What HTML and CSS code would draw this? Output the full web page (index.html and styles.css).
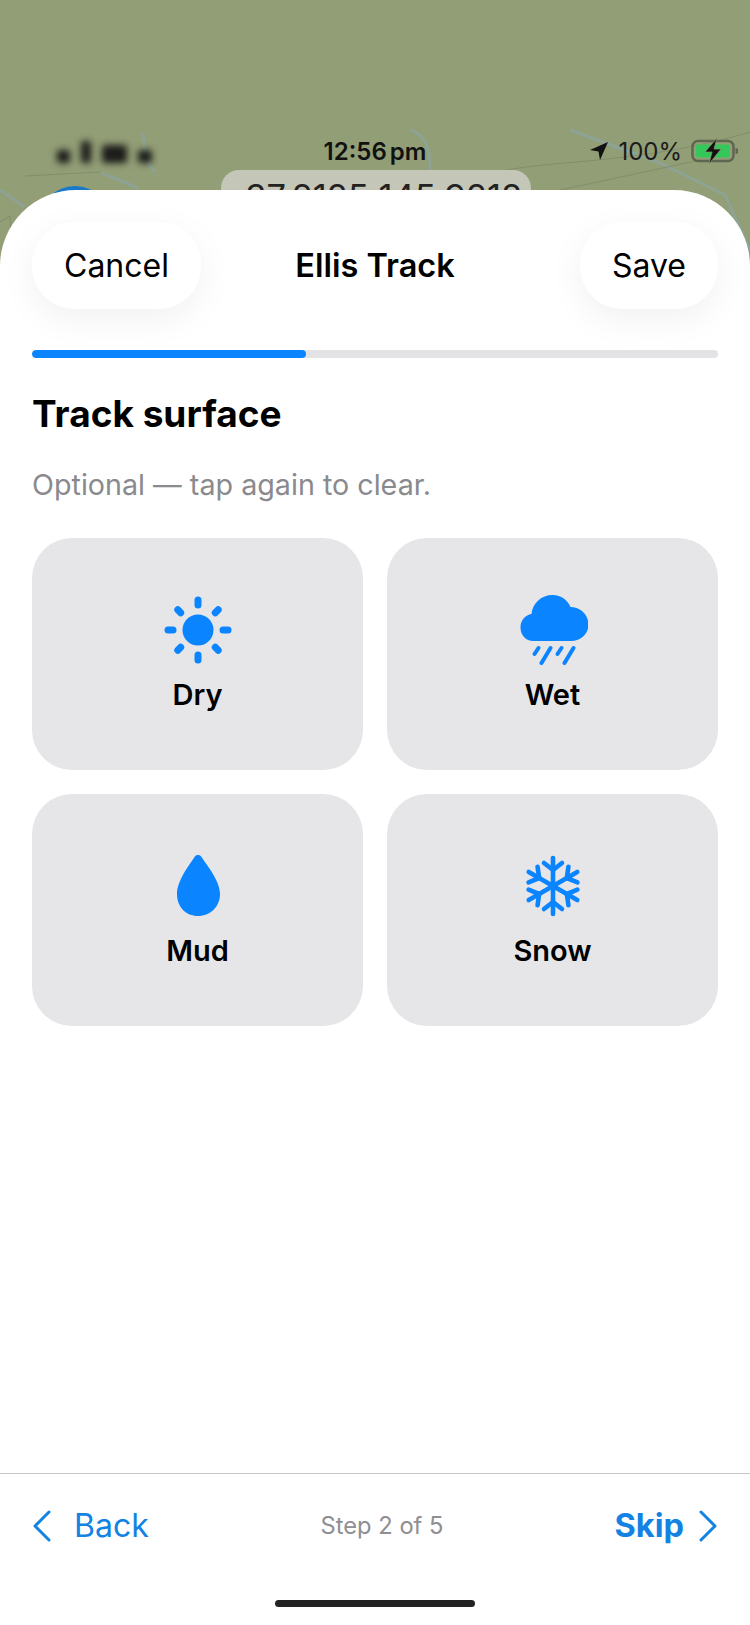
FILE: index.html
```html
<!DOCTYPE html>
<html>
<head>
    <meta charset="utf-8">
    <title>Ellis Track - Track surface</title>
    <link rel="stylesheet" href="styles.css">
</head>
<body>
    <div class="page">
        <!-- map showing behind the sheet -->
        <div class="map">
            <svg class="map_lines" width="750" height="280" viewBox="0 0 750 280">
                <g fill="none" stroke="#8aa6a8" stroke-width="3" opacity="0.6">
                    <path d="M143 133 L146 160 L155 172"/>
                    <path d="M102 173 L138 188"/>
                    <path d="M0 190 L25 207"/>
                    <path d="M411 130 C425 136 430 145 430 170"/>
                    <path d="M570 130 L660 163 L725 195 L750 250"/>
                </g>
                <g fill="none" stroke="#6f7a5c" stroke-width="1" opacity="0.45">
                    <path d="M25 176 L100 172"/>
                    <path d="M500 172 C540 160 640 165 750 132"/>
                    <path d="M560 190 L700 160"/>
                    <path d="M0 222 L10 216 L12 260"/>
                </g>
                <circle cx="75" cy="222" r="36" fill="#1a78c8"/>
            </svg>
            <div class="coord_chip">-37.2125 145.9218</div>
            <div class="status_bar">
                <div class="signal_blur">
                    <span class="blob b1"></span>
                    <span class="blob b2"></span>
                    <span class="blob b3"></span>
                    <span class="blob b4"></span>
                </div>
                <div class="status_time">12:56 pm</div>
                <div class="status_right">
                    <svg width="20" height="20" viewBox="0 0 20 20"><path d="M19 1 L1 9 L9.5 10.5 L11 19 Z" fill="#111"/></svg>
                    <span class="status_pct">100%</span>
                    <svg width="47" height="26" viewBox="0 0 47 26">
                        <rect x="1.500" y="3" width="41" height="20" rx="5.500" fill="none" stroke="#5f6650" stroke-width="2.500"/>
                        <rect x="5" y="6.500" width="34" height="13" rx="2.500" fill="#34c759"/>
                        <path d="M44.500 10 a3 3 0 0 1 0 6 Z" fill="#5f6650"/>
                        <path d="M26 0 L14 14 L21 14 L18 26 L30 11 L23 11 Z" fill="#111" stroke="#8d9873" stroke-width="0.7"/>
                    </svg>
                </div>
            </div>
        </div>

        <div class="sheet">
            <div class="sheet_header">
                <button class="pill_btn cancel_btn">Cancel</button>
                <h1 class="sheet_title">Ellis Track</h1>
                <button class="pill_btn save_btn">Save</button>
            </div>

            <div class="progress"><div class="progress_fill" style="width: 40%"></div></div>

            <div class="content">
                <h2 class="step_title">Track surface</h2>
                <p class="step_hint">Optional — tap again to clear.</p>

                <div class="option_grid">
                    <div class="option_card">
                        <svg class="option_icon" viewBox="0 0 70 70">
                            <circle cx="35" cy="35" r="15.500" fill="#0a84ff"/>
                            <g stroke="#0a84ff" stroke-width="7" stroke-linecap="round">
                                <path d="M35 5 V10"/>
                                <path d="M35 60 V65"/>
                                <path d="M5 35 H10"/>
                                <path d="M60 35 H65"/>
                                <path d="M14.800 14.800 L17.700 17.700"/>
                                <path d="M52.300 52.300 L55.200 55.200"/>
                                <path d="M52.300 17.700 L55.200 14.800"/>
                                <path d="M14.800 55.200 L17.700 52.300"/>
                            </g>
                        </svg>
                        <span class="option_label">Dry</span>
                    </div>
                    <div class="option_card">
                        <svg class="option_icon" viewBox="27.500 0 70 70">
                            <path d="M43 46 C35 46 30 40 30 32.500 C30 25 35 20 41 19 C42 8 51 0 62 0 C71 0 77 5 80 12 C90 12 98 20 98 29.500 C98 39 90 46 81 46 Z" fill="#0a84ff"/>
                            <g stroke="#0a84ff" stroke-width="4" stroke-linecap="round">
                                <path d="M48 53 L44 59"/>
                                <path d="M60 53 L51 68"/>
                                <path d="M71 53 L67 59"/>
                                <path d="M83 53 L74 68"/>
                            </g>
                        </svg>
                        <span class="option_label">Wet</span>
                    </div>
                    <div class="option_card">
                        <svg class="option_icon" viewBox="0 0 70 70">
                            <path d="M35 4 C36.500 4 37.500 4.500 38.500 6 C44.500 15 57 30 57 43 C57 56 47 65 35 65 C23 65 14 56 14 43 C14 30 25.500 15 31.500 6 C32.500 4.500 33.500 4 35 4 Z" fill="#0a84ff"/>
                        </svg>
                        <span class="option_label">Mud</span>
                    </div>
                    <div class="option_card">
                        <svg class="option_icon" viewBox="0 0 70 70">
                            <defs>
                                <g id="snow_arm">
                                    <path d="M35 35 V7"/>
                                    <path d="M26 12 L35 19 L44 12"/>
                                </g>
                            </defs>
                            <g fill="none" stroke="#0a84ff" stroke-width="4.600" stroke-linecap="round" stroke-linejoin="round">
                                <use href="#snow_arm"/>
                                <use href="#snow_arm" transform="rotate(60 35 35)"/>
                                <use href="#snow_arm" transform="rotate(120 35 35)"/>
                                <use href="#snow_arm" transform="rotate(180 35 35)"/>
                                <use href="#snow_arm" transform="rotate(240 35 35)"/>
                                <use href="#snow_arm" transform="rotate(300 35 35)"/>
                            </g>
                        </svg>
                        <span class="option_label">Snow</span>
                    </div>
                </div>
            </div>

            <div class="footer">
                <div class="footer_link">
                    <svg class="chevron" width="20" height="32" viewBox="0 0 20 32"><path d="M17 2 L3 16 L17 30" fill="none" stroke="#1283e2" stroke-width="3" stroke-linecap="round" stroke-linejoin="round"/></svg>
                    <span class="back_text">Back</span>
                </div>
                <div class="step_count">Step 2 of 5</div>
                <div class="footer_link">
                    <span class="skip_text">Skip</span>
                    <svg class="chevron" width="20" height="32" viewBox="0 0 20 32"><path d="M3 2 L17 16 L3 30" fill="none" stroke="#1283e2" stroke-width="3" stroke-linecap="round" stroke-linejoin="round"/></svg>
                </div>
            </div>
            <div class="home_area"><div class="home_bar"></div></div>
        </div>
    </div>
</body>
</html>
```

FILE: styles.css
```css
body{
    margin: 0;
    background-color: #fff;
    font-family: Inter, "Liberation Sans", sans-serif;
}
.page{
    width: 750px;
    height: 1625px;
    display: flex;
    flex-direction: column;
    overflow: hidden;
    background-color: #929e76;
}

/* map behind the sheet */
.map{
    position: relative;
    height: 190px;
    box-sizing: border-box;
    padding-top: 136px;
}
.map_lines{
    position: absolute;
    left: 0;
    top: 0;
}
.coord_chip{
    position: absolute;
    left: 221px;
    top: 170px;
    width: 310px;
    height: 54px;
    background-color: #c4c6b8;
    border-radius: 18px;
    text-align: center;
    font-size: 34.500px;
    line-height: 54px;
    color: #222;
}
.status_bar{
    position: relative;
    display: grid;
    grid-template-columns: 1fr auto 1fr;
    align-items: center;
    height: 30px;
    padding: 0 12px;
}
.signal_blur{
    display: flex;
    align-items: flex-end;
    margin-left: 45px;
    filter: blur(3.500px);
    height: 24px;
}
.blob{
    background-color: #1c1c1a;
    border-radius: 3px;
    margin-right: 11px;
}
.b1{height: 13px; width: 13px;}
.b2{height: 22px; width: 10px;}
.b3{height: 18px; width: 25px;}
.b4{height: 13px; width: 14px;}
.status_time{
    font-size: 24px;
    font-weight: 600;
    word-spacing: -3px;
    color: #111;
}
.status_right{
    display: flex;
    align-items: center;
    justify-content: flex-end;
    gap: 9px;
}
.status_pct{
    font-size: 24px;
    color: #1b1b1b;
}

/* sheet */
.sheet{
    position: relative;
    flex: 1;
    display: flex;
    flex-direction: column;
    background-color: #fff;
    border-radius: 76px 76px 0 0;
}
.sheet_header{
    display: grid;
    grid-template-columns: 1fr auto 1fr;
    align-items: center;
    padding: 32px 32px 0;
}
.pill_btn{
    height: 87px;
    padding: 0 32px;
    border: none;
    border-radius: 42px;
    background-color: #fff;
    box-shadow: 0 10px 36px rgba(0, 0, 0, 0.06);
    font-family: inherit;
    font-size: 32px;
    color: #000;
}
.cancel_btn{justify-self: start;}
.save_btn{justify-self: end;}
.sheet_title{
    margin: 0;
    font-size: 32.500px;
    font-weight: 600;
    color: #000;
}
.progress{
    margin: 41px 32px 0;
    height: 8px;
    border-radius: 4px;
    background-color: #e3e3e6;
    overflow: hidden;
}
.progress_fill{
    height: 100%;
    border-radius: 4px;
    background-color: #0a84ff;
}
.content{
    flex: 1;
    padding: 0 32px;
}
.step_title{
    margin: 33px 0 0;
    font-size: 37px;
    line-height: 46px;
    font-weight: 700;
    color: #000;
}
.step_hint{
    margin: 30px 0 0;
    font-size: 28.700px;
    line-height: 36px;
    color: #8a8a8e;
}
.option_grid{
    display: grid;
    grid-template-columns: 1fr 1fr;
    grid-auto-rows: 232px;
    gap: 24px;
    margin-top: 35px;
}
.option_card{
    display: flex;
    flex-direction: column;
    align-items: center;
    justify-content: center;
    gap: 12px;
    background-color: #e6e6e8;
    border-radius: 40px;
}
.option_icon{
    width: 70px;
    height: 70px;
}
.option_label{
    font-size: 29px;
    line-height: 36px;
    font-weight: 600;
    color: #000;
}

/* footer */
.footer{
    display: grid;
    grid-template-columns: 1fr auto 1fr;
    align-items: center;
    height: 103px;
    box-sizing: border-box;
    border-top: 1px solid #c6c6c8;
    padding: 1px 32px 0;
}
.footer_link{
    display: flex;
    align-items: center;
    gap: 22px;
    font-size: 32px;
    color: #1283e2;
}
.footer_link:last-child{
    justify-content: flex-end;
    gap: 14px;
}
.back_text{
    font-weight: 400;
}
.skip_text{
    font-size: 32.500px;
    font-weight: 700;
}
.step_count{
    font-size: 23.700px;
    color: #8e8e93;
    margin-left: 14px;
}
.home_area{
    display: flex;
    justify-content: center;
    height: 49px;
}
.home_bar{
    width: 200px;
    height: 7px;
    margin-top: 24px;
    border-radius: 4px;
    background-color: #232323;
}
```
